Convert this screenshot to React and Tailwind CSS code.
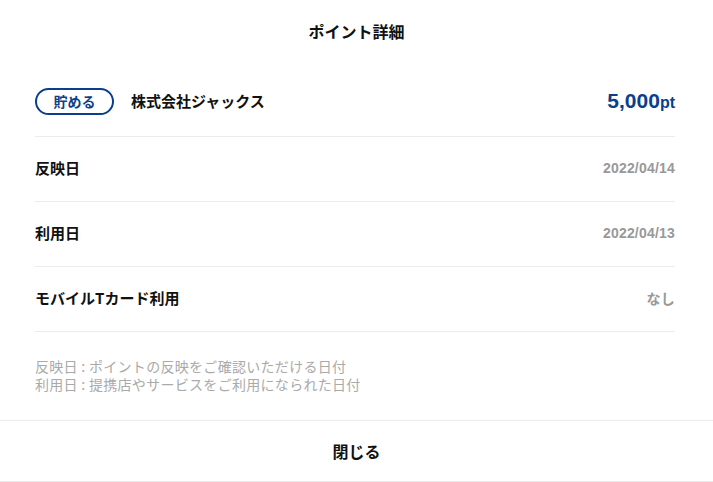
export default function App() {
  const jp = { fontFamily: '"Noto Sans CJK JP", "Liberation Sans", sans-serif' };
  const num = { fontFamily: '"Liberation Sans", Arial, sans-serif' };
  const rows = [
    { label: "反映日", value: "2022/04/14" },
    { label: "利用日", value: "2022/04/13" },
    { label: "モバイルTカード利用", value: "なし" },
  ];
  return (
    <div className="w-[713px] h-[482px] bg-white text-[#111]" style={jp}>
      <div className="h-[72px] pt-[20px] flex justify-center">
        <div className="text-[16px] font-bold leading-[22px]">ポイント詳細</div>
      </div>
      <div className="pl-[35px] pr-[38px]">
        <div className="h-[65px] border-b border-[#ececec] flex items-center justify-between pb-[6px]">
          <div className="flex items-center">
            <div className="w-[79px] h-[27px] rounded-full border-2 border-[#0b3f8c] flex items-center justify-center text-[14px] font-bold text-[#0b3f8c] leading-none">
              貯める
            </div>
            <div className="ml-[17px] text-[15px] font-bold">株式会社ジャックス</div>
          </div>
          <div className="flex items-baseline text-[#0b3f8c] font-bold" style={num}>
            <span className="text-[21px]">5,000</span>
            <span className="text-[16px]">pt</span>
          </div>
        </div>
        {rows.map((r) => (
          <div key={r.label} className="h-[65px] border-b border-[#ececec] flex items-center justify-between pb-[2px]">
            <div className="text-[15px] font-bold">{r.label}</div>
            <div
              className="text-[14px] font-bold text-[#999] tracking-[0.2px]"
              style={r.value === "なし" ? jp : num}
            >
              {r.value}
            </div>
          </div>
        ))}
        <div className="pt-[25px] pb-[27px] text-[14px] leading-[18px] text-[#aaa] tracking-[0.3px]">
          <div>反映日 : ポイントの反映をご確認いただける日付</div>
          <div>利用日 : 提携店やサービスをご利用になられた日付</div>
        </div>
      </div>
      <div className="border-t border-b border-[#ececec] h-[62px] flex items-center justify-center">
        <div className="text-[16px] font-bold">閉じる</div>
      </div>
    </div>
  );
}
